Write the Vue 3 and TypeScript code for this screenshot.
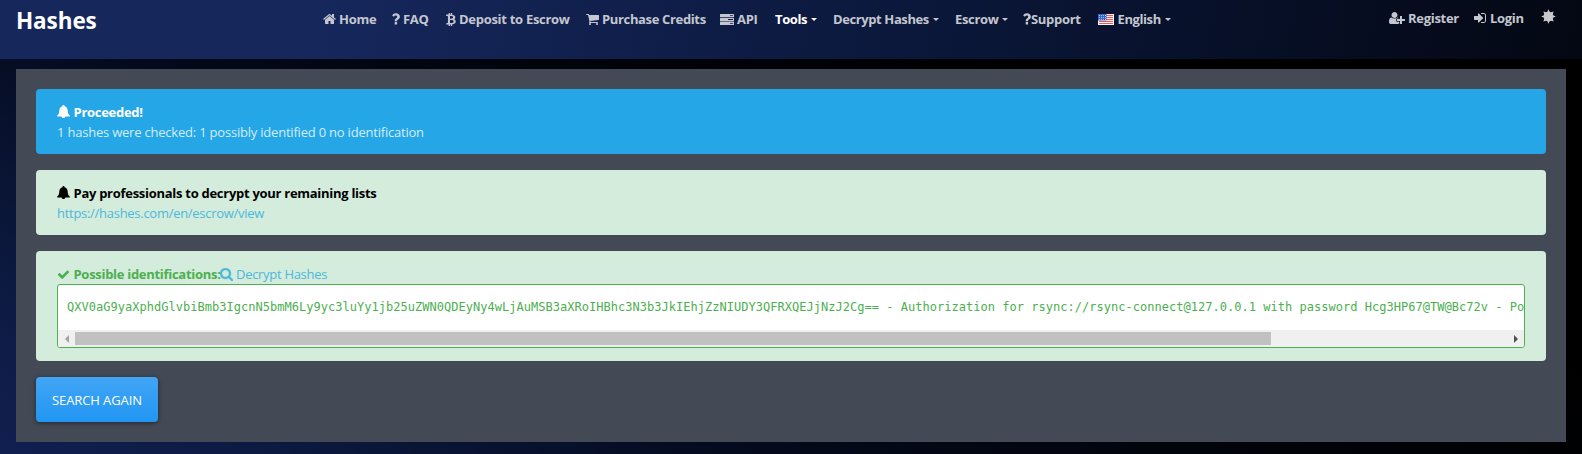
<script setup lang="ts">
interface NavItem {
  label: string
  cls: string
  icon?: string
  view?: string
  caret?: boolean
  active?: boolean
}

const icons = {
  home: 'M1472 992v480q0 26-19 45t-45 19h-384v-384h-256v384h-384q-26 0-45-19t-19-45v-480q0-1 .5-3t.5-3l575-474 575 474q1 2 1 6zm223-69l-62 74q-8 9-21 11h-3q-13 0-21-7l-692-577-692 577q-12 8-24 7-13-2-21-11l-62-74q-8-10-7-23.5t11-21.5l719-599q32-26 76-26t76 26l244 204v-195q0-14 9-23t23-9h192q14 0 23 9t9 23v408l219 182q10 8 11 21.5t-7 23.5z',
  cart: 'M704 1536q0 52-38 90t-90 38-90-38-38-90 38-90 90-38 90 38 38 90zm896 0q0 52-38 90t-90 38-90-38-38-90 38-90 90-38 90 38 38 90zm128-1088v512q0 24-16.5 42.5t-40.5 21.5l-1044 122q13 60 13 70 0 16-24 64h920q26 0 45 19t19 45-19 45-45 19h-1024q-26 0-45-19t-19-45q0-11 8-31.5t16-36 21.5-40 15.5-29.5l-177-823h-204q-26 0-45-19t-19-45 19-45 45-19h256q16 0 28.5 6.5t19.5 15.5 13 24.5 8 26 5.5 29.5 4.5 26h1201q26 0 45 19t19 45z',
  check: 'M1671 566q0 40-28 68l-724 724-136 136q-28 28-68 28t-68-28l-136-136-362-362q-28-28-28-68t28-68l136-136q28-28 68-28t68 28l294 295 656-657q28-28 68-28t68 28l136 136q28 28 28 68z',
  search: 'M1216 832q0-185-131.5-316.5t-316.5-131.5-316.5 131.5-131.5 316.5 131.5 316.5 316.5 131.5 316.5-131.5 131.5-316.5zm512 832q0 52-38 90t-90 38q-54 0-90-38l-343-342q-179 124-399 124-143 0-273.5-55.5t-225-150-150-225-55.5-273.5 55.5-273.5 150-225 225-150 273.5-55.5 273.5 55.5 225 150 150 225 55.5 273.5q0 220-124 399l343 343q37 37 37 90z',
  login: 'M1312 896q0 26-19 45l-544 544q-19 19-45 19t-45-19-19-45v-288h-448q-26 0-45-19t-19-45v-384q0-26 19-45t45-19h448v-288q0-26 19-45t45-19 45 19l544 544q19 19 19 45zm352-352v704q0 119-84.5 203.5t-203.5 84.5h-320q-13 0-22.5-9.5t-9.5-22.5q0-4-1-20t-.5-26.5 3-23.5 10-19.5 20.5-6.5h320q66 0 113-47t47-113v-704q0-66-47-113t-113-47h-312l-11.5-1-11.5-3-8-5.5-7-9-2-13.5q0-4-1-20t-.5-26.5 3-23.5 10-19.5 20.5-6.5h320q119 0 203.5 84.5t84.5 203.5z',
  register: 'M704 896q-159 0-271.5-112.5t-112.5-271.5 112.5-271.5 271.5-112.5 271.5 112.5 112.5 271.5-112.5 271.5-271.5 112.5zm960 128h352q13 0 22.5 9.5t9.5 22.5v192q0 13-9.5 22.5t-22.5 9.5h-352v352q0 13-9.5 22.5t-22.5 9.5h-192q-13 0-22.5-9.5t-9.5-22.5v-352h-352q-13 0-22.5-9.5t-9.5-22.5v-192q0-13 9.5-22.5t22.5-9.5h352v-352q0-13 9.5-22.5t22.5-9.5h192q13 0 22.5 9.5t9.5 22.5v352zm-736 224q0 52 38 90t90 38h256v238q-68 50-171 50h-874q-121 0-194-69t-73-190q0-53 3.5-103.5t14-109 26.5-108.5 43-97.5 62-81 85.5-53.5 111.5-20q19 0 39 17 79 61 154.5 91.5t164.5 30.5 164.5-30.5 154.5-91.5q20-17 39-17 132 0 217 96h-223q-52 0-90 38t-38 90v192z',
  server: 'M.5 0h13q.5 0 .5.5v2.300q0 .5-.5.5H.5Q0 3.300 0 2.800V.5Q0 0 .5 0zM10 1.200v.8h3v-.8zM.5 3.900h13q.5 0 .5.5v2.300q0 .5-.5.5H.5Q0 7.200 0 6.700V4.400q0-.5.5-.5zM8 5.100v.8h5v-.8zM.5 7.800h13q.5 0 .5.5v2.200q0 .5-.5.5H.5Q0 11 0 10.500V8.300q0-.5.5-.5zM10 9v.8h3V9z',
  bitcoin: 'M0 1.500h2.400V0h1.300v1.500h.8V0h1.300v1.600C8 1.900 9 3 8.800 4.300c-.1.900-.6 1.500-1.400 1.800C8.600 6.400 9.300 7.200 9.200 8.400 9.100 10 7.900 10.700 5.800 10.900v1.600H4.500V11h-.8v1.500H2.400V11H0l.3-1.400h.9q.5 0 .5-.5V3.400q0-.6-.6-.6H0zM3.700 2.900v2.600c1.700.1 3-.1 3-1.300s-1.300-1.400-3-1.300zM3.700 6.800v2.800c2 .1 3.500-.1 3.500-1.400s-1.500-1.500-3.500-1.400z',
  question: 'M2.700 8.200V7.600c0-1.300.7-1.900 1.500-2.400.7-.4 1-.8 1-1.400C5.200 3 4.600 2.500 3.800 2.500 2.900 2.500 2.500 2.900 1.800 3.700L.2 2.500C1.100 1 2.200.3 4 .3c2.100 0 3.900 1.400 3.900 3.400 0 1.400-.8 2.200-1.800 2.800-.7.4-1 .7-1 1.200v.5zM2.700 9.100h2.400v2.400H2.700z',
  bell: 'M6.500 0c.6 0 1 .4 1 1v.3c2 .4 3.100 2 3.200 4.100.1 2.500.5 3.800 2.100 5.100v1H8.400c0 .9-.8 1.500-1.900 1.500S4.600 12.400 4.600 11.500H.2v-1c1.600-1.300 2-2.600 2.100-5.100.1-2.100 1.200-3.700 3.200-4.100V1c0-.6.4-1 1-1z',
}
const fa = '0 0 1792 1792'

const navItems: NavItem[] = [
  { label: 'Home', cls: 'home', icon: icons.home, view: '65 128 1662 1536' },
  { label: 'FAQ', cls: 'faq', icon: icons.question, view: '0 0 8 12' },
  { label: 'Deposit to Escrow', cls: 'deposit', icon: icons.bitcoin, view: '0 0 9.3 12.5' },
  { label: 'Purchase Credits', cls: 'purchase', icon: icons.cart, view: '64 256 1664 1408' },
  { label: 'API', cls: 'api', icon: icons.server, view: '0 0 14 11' },
  { label: 'Tools', cls: 'tools', caret: true, active: true },
  { label: 'Decrypt Hashes', cls: 'decrypt', caret: true },
  { label: 'Escrow', cls: 'escrow', caret: true },
  { label: 'Support', cls: 'support', icon: icons.question, view: '0 0 8 12' },
  { label: 'English', cls: 'english', caret: true },
]

const result =
  'QXV0aG9yaXphdGlvbiBmb3IgcnN5bmM6Ly9yc3luYy1jb25uZWN0QDEyNy4wLjAuMSB3aXRoIHBhc3N3b3JkIEhjZzNIUDY3QFRXQEJjNzJ2Cg== - Authorization for rsync://rsync-connect@127.0.0.1 with password Hcg3HP67@TW@Bc72v - Po'
</script>

<template>
  <div class="page">
    <header class="navbar">
      <a class="brand"><span>Hashes</span></a>
      <nav class="main-nav">
        <a v-for="item in navItems" :key="item.cls" class="nav-link" :class="[item.cls, { active: item.active }]">
          <svg v-if="item.icon" class="icon" :viewBox="item.view"><path :d="item.icon" fill-rule="evenodd" /></svg>
          <svg v-if="item.cls === 'english'" class="flag" viewBox="0 0 16 11">
            <rect width="16" height="11" fill="#f4f4f6" />
            <path d="M1 1.500h14M1 3.500h14M1 5.500h14M1 7.500h14M1 9.500h14" stroke="#ee5a50" />
            <rect width="8.500" height="6.500" fill="#2f66cf" />
            <path d="M1 1.500h7M1 3.500h7M1 5.500h7" stroke="#cfdcf5" stroke-width=".8" stroke-dasharray="1 1" />
          </svg>
          <span class="label">{{ item.label }}</span>
          <i v-if="item.caret" class="caret"></i>
        </a>
      </nav>
      <nav class="user-nav">
        <a class="nav-link register">
          <svg class="icon" viewBox="0 128 2048 1536"><path :d="icons.register" /></svg>
          <span class="label">Register</span>
        </a>
        <a class="nav-link login">
          <svg class="icon" viewBox="128 256 1536 1280"><path :d="icons.login" /></svg>
          <span class="label">Login</span>
        </a>
        <svg class="sun" viewBox="-7.5 -7.5 15 15">
          <circle r="4.800" />
          <path d="M0-7.300L1.500-4h-3zM0 7.300L1.500 4h-3zM-7.300 0L-4-1.500v3zM7.300 0L4-1.500v3zM5.100-5.100L4-1.500 1.500-4zM5.100 5.100L1.500 4 4 1.500zM-5.100 5.100L-4 1.500-1.500 4zM-5.100-5.100L-1.500-4-4-1.500z" />
        </svg>
      </nav>
    </header>

    <main class="panel">
      <section class="alert info">
        <div class="line strong">
          <svg class="bell" viewBox="0 0 13 13"><path :d="icons.bell" /></svg><span class="t1">Proceeded!</span>
        </div>
        <div class="line"><span class="t2">1 hashes were checked: 1 possibly identified 0 no identification</span></div>
      </section>
      <section class="alert offer">
        <div class="line strong">
          <svg class="bell" viewBox="0 0 13 13"><path :d="icons.bell" /></svg><span class="t3">Pay professionals to decrypt your remaining lists</span>
        </div>
        <div class="line"><a class="link t4">https://hashes.com/en/escrow/view</a></div>
      </section>
      <section class="alert found">
        <div class="line strong">
          <svg class="check" :viewBox="fa"><path :d="icons.check" /></svg><span class="t5">Possible identifications:</span>
          <a class="link"><svg class="search" viewBox="64 128 1664 1664"><path :d="icons.search" /></svg><span class="t6">Decrypt Hashes</span></a>
        </div>
        <div class="output">
          <pre>{{ result }}</pre>
          <div class="scrollbar">
            <i class="arrow left"></i>
            <div class="track"><div class="thumb"></div></div>
            <i class="arrow right"></i>
          </div>
        </div>
      </section>
      <button class="again" type="button"><span>SEARCH AGAIN</span></button>
    </main>
  </div>
</template>

<style>
body {
  margin: 0;
  overflow: hidden;
}
</style>

<style scoped>
* {
  box-sizing: border-box;
}
.page {
  width: 1582px;
  height: 454px;
  font-family: 'Open Sans', 'Noto Sans', sans-serif;
  font-size: 13px;
  background: linear-gradient(32deg, #101f50 0%, #0d1b44 10%, #040a1c 33%, #02040c 50%, #000 75%);
}
.navbar {
  height: 59px;
  padding: 0 26px 0 16px;
  display: flex;
  align-items: flex-start;
  background: linear-gradient(97deg, #16275c 0%, #16275c 20%, #0c1a40 52%, #070f26 80%, #040813 100%);
}
.brand {
  width: 307px;
  padding-top: 5px;
  color: #fff;
  font-size: 22.500px;
  line-height: 32px;
  font-weight: 700;
}
.brand span {
  letter-spacing: -0.1px;
}
.main-nav {
  display: flex;
  flex: 1;
  padding-top: 9px;
}
.nav-link {
  display: flex;
  align-items: center;
  height: 20px;
  color: #c4c7cf;
  font-weight: 700;
  white-space: nowrap;
  letter-spacing: -0.29px;
}
.nav-link.active {
  color: #fff;
}
svg {
  fill: currentColor;
  flex: none;
}
.icon {
  height: 12px;
  margin-right: 4px;
}
.home { width: 69px; }
.home .icon { width: 13px; height: 12px; margin-right: 3px; }
.faq { width: 54px; }
.faq .icon { width: 8px; height: 12px; margin-right: 3px; }
.deposit { width: 140px; }
.deposit .icon { width: 10px; height: 13px; margin-right: 3px; }
.purchase { width: 134px; letter-spacing: -0.35px; }
.purchase .icon { width: 13px; height: 11px; margin-right: 3px; }
.api { width: 55px; }
.api .icon { width: 14px; height: 11px; margin-right: 3px; }
.tools { width: 58px; letter-spacing: -0.4px; }
.decrypt { width: 122px; letter-spacing: -0.4px; }
.escrow { width: 68px; letter-spacing: -0.35px; }
.support { width: 75px; }
.support .icon { width: 8px; height: 12px; margin-right: 0; }
.flag {
  width: 16px;
  height: 11px;
  margin-right: 3.500px;
}
.english { letter-spacing: -0.4px; }
.caret {
  margin: 1px 0 0 4px;
  border: 3px solid transparent;
  border-top-color: currentColor;
  border-bottom: 0;
}
.user-nav {
  display: flex;
  padding-top: 8px;
}
.register { width: 85px; }
.register .icon { width: 16px; height: 12px; margin-right: 3px; }
.login { width: 67px; }
.login .icon { width: 12px; height: 10px; }
.sun {
  width: 15px;
  height: 15px;
  margin-top: 1px;
  color: #c9c9cb;
}
.panel {
  width: 1550px;
  height: 373px;
  margin: 10px 0 0 16px;
  padding: 20px;
  background: #434a55;
}
.alert {
  height: 65px;
  margin-bottom: 16px;
  padding: 13px 21px 0;
  border-radius: 4px;
}
.line {
  height: 20px;
  display: flex;
  align-items: center;
  white-space: nowrap;
}
.strong {
  font-weight: 700;
}
.info {
  background: #25a6e6;
  color: #d3edfa;
}
.info .strong {
  color: #fff;
}
.offer,
.found {
  background: #d4ecdb;
  color: #4caf50;
}
.offer .strong {
  color: #000;
}
.found {
  height: 110px;
}
.bell,
.check {
  width: 13px;
  height: 13px;
  margin-right: 3.500px;
}
.bell {
  margin-top: -1px;
}
.link {
  color: #4db8dc;
  font-weight: 400;
  display: flex;
  align-items: center;
}
.search {
  width: 13px;
  height: 13px;
  margin: 0 3px 0 -0.500px;
}
.search path {
  stroke: currentColor;
  stroke-width: 40;
}
.t1 { letter-spacing: -0.28px; }
.t3 { letter-spacing: -0.28px; }
.t5 { letter-spacing: -0.29px; }
.t2 { letter-spacing: -0.21px; }
.t4 { letter-spacing: -0.28px; }
.t6 { letter-spacing: -0.3px; }
.output {
  height: 64px;
  border: 1px solid #4caf50;
  border-radius: 3px;
  background: #fff;
  overflow: hidden;
}
pre {
  height: 45px;
  margin: 0;
  padding: 13px 0 0 9px;
  color: #4caf50;
  font: 12px/19px 'DejaVu Sans Mono', monospace;
  letter-spacing: 0.026px;
  white-space: pre;
  overflow: hidden;
}
.scrollbar {
  height: 17px;
  display: flex;
  align-items: center;
  background: #f0f0f0;
}
.track {
  flex: 1;
}
.thumb {
  width: 1196px;
  height: 13px;
  background: #c1c1c1;
}
.arrow {
  width: 17px;
  display: flex;
  justify-content: center;
}
.arrow::before {
  content: '';
  border: 4px solid transparent;
}
.arrow.left::before {
  border-left: 0;
  border-right-color: #a3a3a3;
}
.arrow.right::before {
  border-right: 0;
  border-left-color: #505050;
}
.again {
  display: block;
  width: 122px;
  height: 45px;
  padding: 0;
  border: 0;
  border-radius: 4px;
  color: #fff;
  font: 400 13px 'Open Sans', 'Noto Sans', sans-serif;
  letter-spacing: -0.1px;
  background: linear-gradient(#42a5f5, #2196f3);
  box-shadow: 0 1px 4px rgba(0, 0, 0, 0.5);
}
</style>
